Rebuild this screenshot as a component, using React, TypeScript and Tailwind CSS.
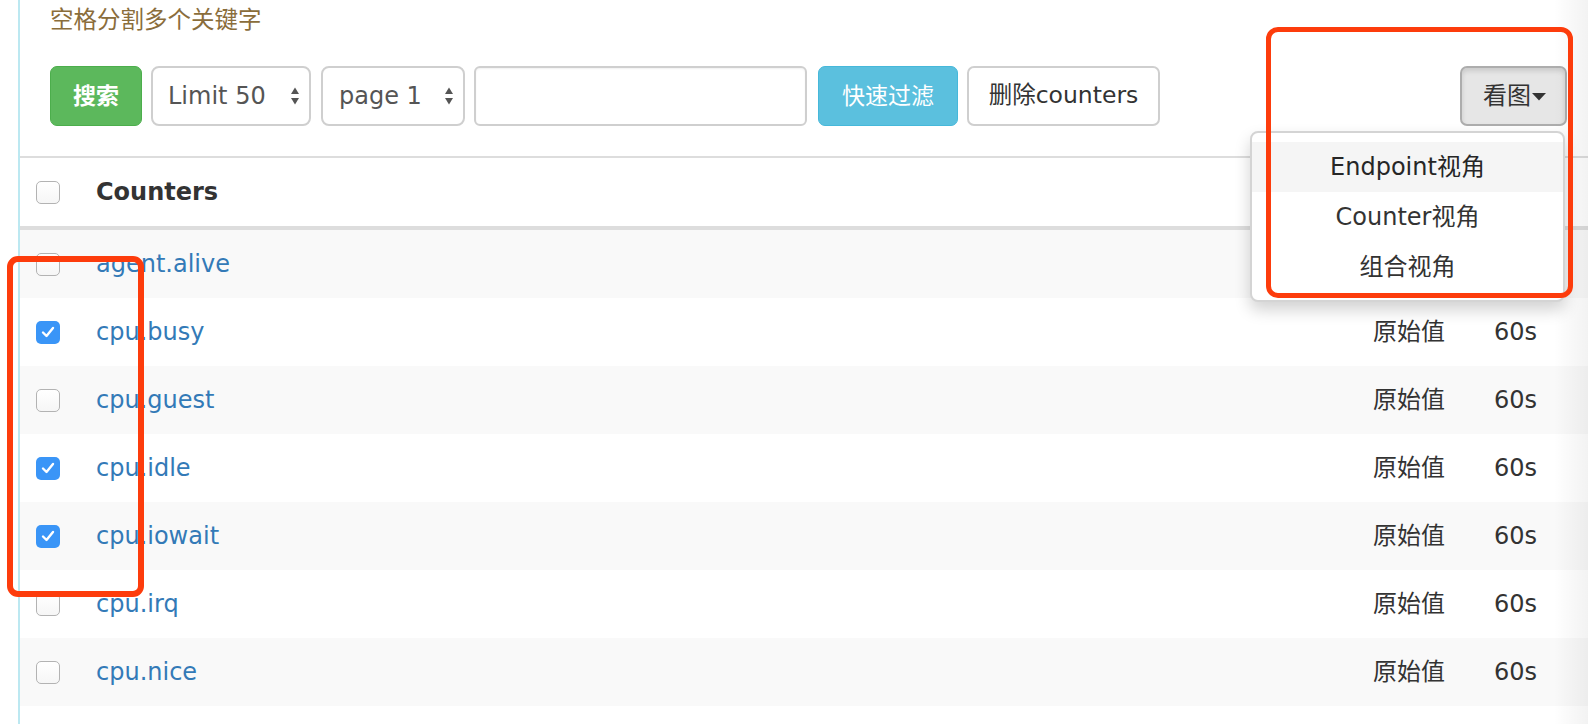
import React from "react";

type Row = { name: string; checked: boolean; hidden?: boolean };

const rows: Row[] = [
  { name: "agent.alive", checked: false, hidden: true },
  { name: "cpu.busy", checked: true },
  { name: "cpu.guest", checked: false },
  { name: "cpu.idle", checked: true },
  { name: "cpu.iowait", checked: true },
  { name: "cpu.irq", checked: false },
  { name: "cpu.nice", checked: false },
];

function Checkbox({ checked }: { checked: boolean }) {
  if (checked) {
    return (
      <div className="w-[24px] h-[23px] rounded-[5px] bg-[#3a95f7] flex items-center justify-center">
        <svg width="14" height="12" viewBox="0 0 14 12" fill="none">
          <path d="M2 6.5 L5.5 10 L12 2" stroke="white" strokeWidth="2.4" strokeLinecap="round" strokeLinejoin="round" />
        </svg>
      </div>
    );
  }
  return (
    <div className="w-[24px] h-[23px] rounded-[5px] border border-[#b3b3b3] bg-gradient-to-b from-white to-[#f6f6f6]" />
  );
}

function SelectArrows() {
  return (
    <svg width="10" height="20" viewBox="0 0 10 20" className="shrink-0">
      <path d="M1 8 L5 1.5 L9 8 Z" fill="#555" />
      <path d="M1 12 L5 18.5 L9 12 Z" fill="#555" />
    </svg>
  );
}

export default function App() {
  return (
    <div className="relative w-[1588px] h-[724px] overflow-hidden bg-white font-['DejaVu_Sans','Noto_Sans_CJK_SC',sans-serif] text-[24px] text-[#333]">
      <div className="ml-[18px] h-full border-l-2 border-[#bce8f1]">
        {/* top section */}
        <div className="pl-[30px] pt-[5px] h-[156px]">
          <div className="text-[#8a6d3b] leading-[30px] text-[23.5px]">空格分割多个关键字</div>
          <div className="mt-[31px] flex items-center pr-[21px] h-[60px]">
            <button className="w-[92px] h-[60px] rounded-[7px] bg-[#5cb85c] border border-[#4cae4c] text-white font-bold text-[23px]">
              搜索
            </button>
            <div className="ml-[9px] w-[160px] h-[60px] rounded-[8px] border-2 border-[#cfcfcf] flex items-center justify-between pl-[15px] pr-[9px] text-[#555]">
              <span>Limit 50</span>
              <SelectArrows />
            </div>
            <div className="ml-[10px] w-[144px] h-[60px] rounded-[8px] border-2 border-[#cfcfcf] flex items-center justify-between pl-[16px] pr-[9px] text-[#555]">
              <span>page 1</span>
              <SelectArrows />
            </div>
            <div className="ml-[9px] w-[333px] h-[60px] rounded-[6px] border-2 border-[#cfcfcf] bg-white shadow-[inset_0_1px_2px_rgba(0,0,0,0.06)]" />
            <button className="ml-[11px] w-[140px] h-[60px] rounded-[7px] bg-[#5bc0de] border border-[#46b8da] text-white text-[23px]">
              快速过滤
            </button>
            <button className="ml-[9px] w-[193px] h-[60px] rounded-[7px] bg-white border-2 border-[#cfcfcf] text-[#333] text-[23.5px]">
              删除counters
            </button>
            <div className="relative ml-auto">
              <button className="w-[107px] h-[60px] rounded-[7px] bg-[#e6e6e6] border-2 border-[#adadad] shadow-[inset_0_3px_5px_rgba(0,0,0,0.125)] flex items-center justify-center pl-[2px] text-[#333]">
                <span>看图</span>
                <svg width="14" height="8" viewBox="0 0 14 8" className="ml-[1px] mt-[2px]">
                  <path d="M0 0 L14 0 L7 7.5 Z" fill="#333" />
                </svg>
              </button>
              {/* dropdown menu */}
              <div className="absolute z-10 top-[65px] right-[2px] w-[315px] rounded-[8px] border-2 border-[#d4d4d4] bg-white shadow-[0_8px_16px_rgba(0,0,0,0.18)] py-[9px]">
                <div className="h-[50px] flex items-center justify-center bg-[#f5f5f5] text-[#262626]">Endpoint视角</div>
                <div className="h-[50px] flex items-center justify-center text-[#333]">Counter视角</div>
                <div className="h-[49px] flex items-center justify-center text-[#333]">组合视角</div>
              </div>
            </div>
          </div>
        </div>

        {/* table */}
        <div className="border-t-2 border-[#dddddd]">
          <div className="grid grid-cols-[76px_1fr_121px_94px] h-[72px] items-center border-b-4 border-[#dddddd]">
            <div className="pl-[16px]">
              <Checkbox checked={false} />
            </div>
            <div className="font-bold text-[#333]">Counters</div>
            <div />
            <div />
          </div>
          {rows.map((r, i) => (
            <div
              key={r.name}
              className={`grid grid-cols-[76px_1fr_121px_94px] h-[68px] items-center ${i % 2 === 0 ? "bg-[#f9f9f9]" : "bg-white"}`}
            >
              <div className="pl-[16px]">
                <Checkbox checked={r.checked} />
              </div>
              <div className="text-[#337ab7]">{r.name}</div>
              <div className="text-[#333]">{r.hidden ? "" : "原始值"}</div>
              <div className="text-[#333]">{r.hidden ? "" : "60s"}</div>
            </div>
          ))}
        </div>
      </div>

      {/* right edge fade */}
      <div className="pointer-events-none absolute right-0 top-0 h-full w-[34px] bg-gradient-to-r from-transparent to-black/[0.05]" />

      {/* annotation boxes */}
      <div className="pointer-events-none absolute z-20 left-[1266px] top-[27px] w-[307px] h-[271px] rounded-[12px] border-[5px] border-[#fd3c0c]" />
      <div className="pointer-events-none absolute z-20 left-[7px] top-[256px] w-[137px] h-[341px] rounded-[11px] border-[6px] border-[#fd3c0c]" />
    </div>
  );
}
